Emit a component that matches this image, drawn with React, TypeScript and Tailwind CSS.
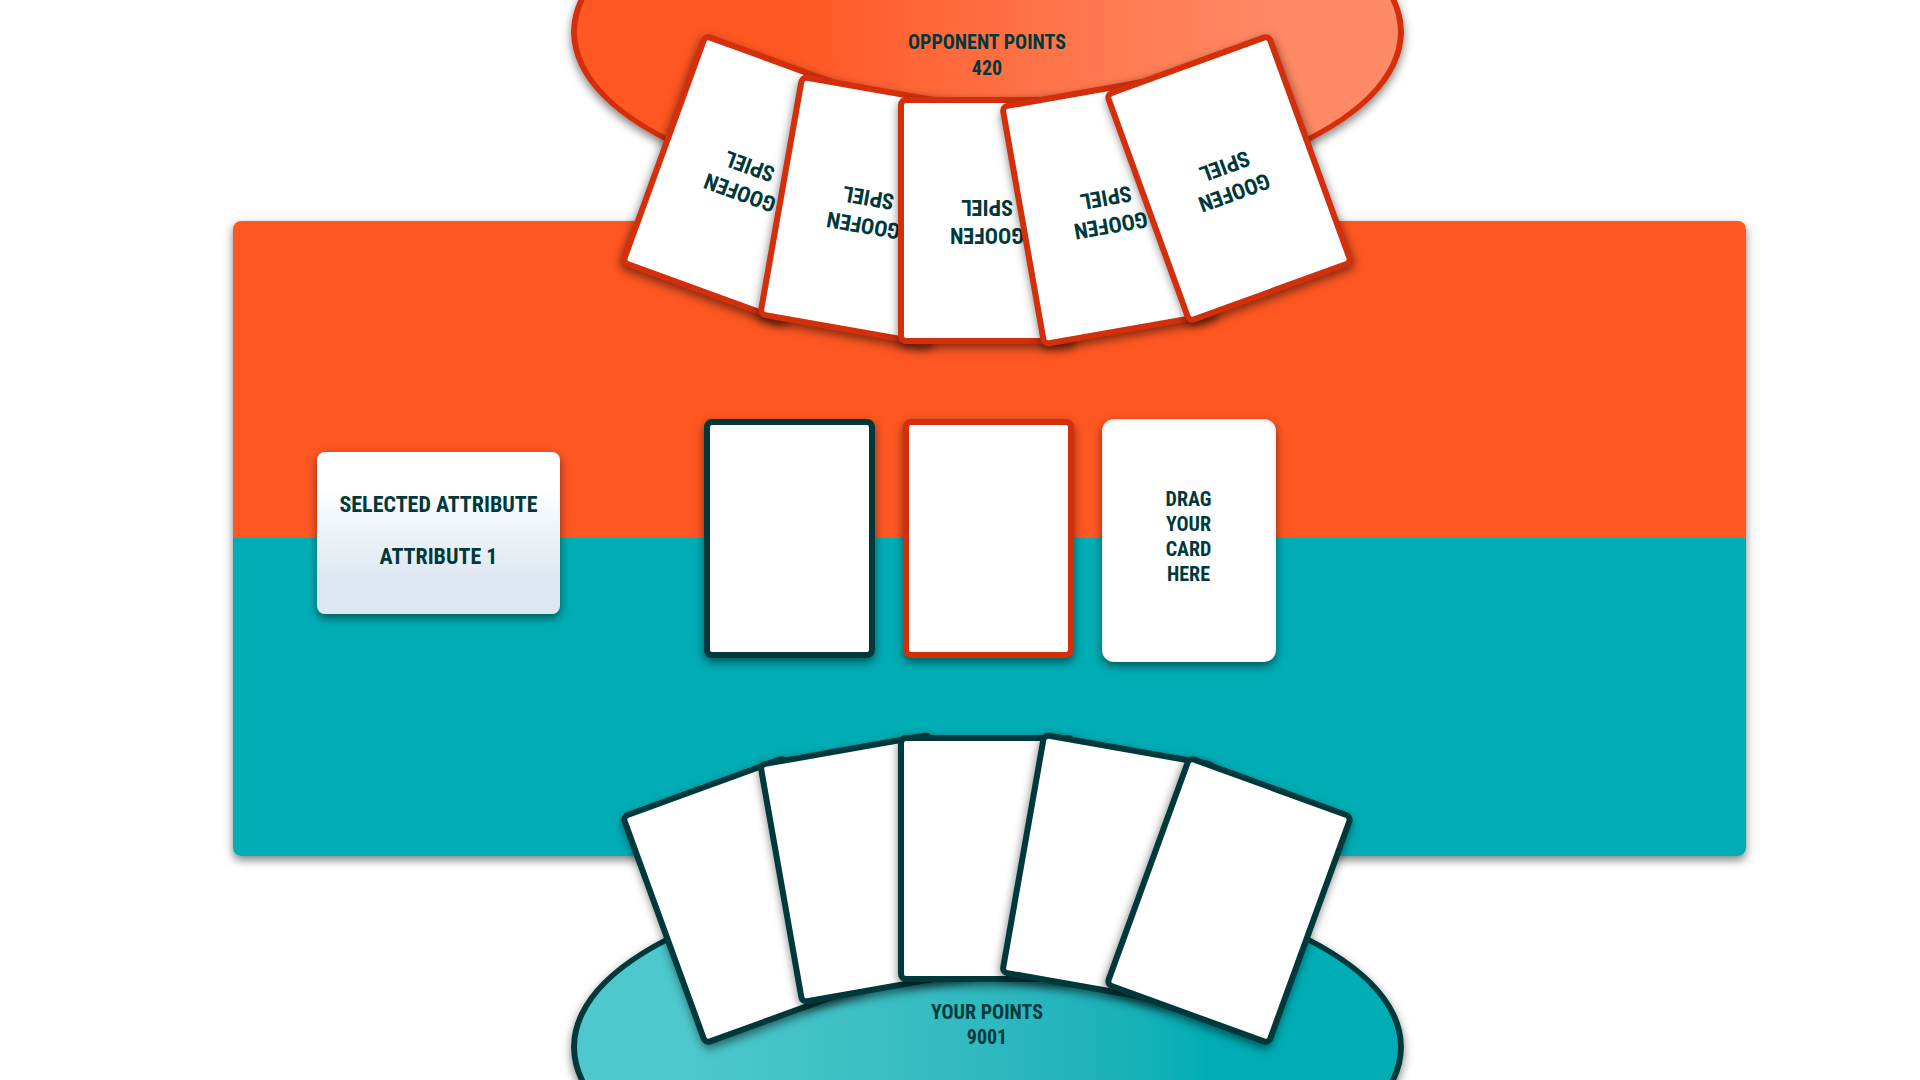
import React from "react";

type Side = "opponent" | "player";

const opponentFan = [
  "-translate-y-[42px] rotate-[20deg]",
  "-translate-y-[10px] rotate-[10deg]",
  "rotate-0",
  "-translate-y-[10px] rotate-[-10deg]",
  "-translate-y-[42px] rotate-[-20deg]",
];

const playerFan = [
  "translate-y-[42px] rotate-[-20deg]",
  "translate-y-[10px] rotate-[-10deg]",
  "rotate-0",
  "translate-y-[10px] rotate-[10deg]",
  "translate-y-[42px] rotate-[20deg]",
];

const borderColor: Record<Side, string> = {
  opponent: "border-[#d32f0b]",
  player: "border-[#00393c]",
};

const shadow = "shadow-[0_4px_10px_rgba(0,0,0,0.5)]";

function PlayedCard({ side }: { side: Side }) {
  return (
    <div className={`h-[239px] w-[171px] rounded-lg border-[6px] bg-white ${borderColor[side]} ${shadow}`} />
  );
}

function Hand({ side }: { side: Side }) {
  const fan = side === "opponent" ? opponentFan : playerFan;
  const place = side === "opponent" ? "self-start mt-[97px]" : "self-end mb-[98px]";
  return (
    <ul className={`col-start-1 row-start-1 z-10 flex justify-self-center ${place}`}>
      {fan.map((pose, i) => (
        <li
          key={i}
          className={`relative -ml-[57px] flex h-[247px] w-[178px] items-center justify-center rounded-lg border-[6px] bg-white first:ml-0 ${borderColor[side]} ${shadow} ${pose}`}
        >
          {side === "opponent" && (
            <span className="rotate-180 text-center text-[22px] leading-7">
              GOOFEN
              <br />
              SPIEL
            </span>
          )}
        </li>
      ))}
    </ul>
  );
}

function Points({ side, label, value }: { side: Side; label: string; value: number }) {
  const look =
    side === "opponent"
      ? "self-start -mt-[141px] justify-end pb-[118px] leading-[26px] bg-linear-to-r from-[#ff5722] from-26% to-[#ff8a65] to-86%"
      : "self-end -mb-[140px] justify-start pt-[120px] leading-[25px] bg-linear-to-r from-[#4dc8cc] from-14% to-[#00adb5] to-77%";
  return (
    <section
      className={`col-start-1 row-start-1 flex h-[346px] w-[833px] flex-col items-center justify-self-center rounded-[50%] border-[6px] text-center text-[20px] ${borderColor[side]} ${shadow} ${look}`}
    >
      <h2>{label}</h2>
      <p>{value}</p>
    </section>
  );
}

export default function App() {
  return (
    <main className="grid h-screen grid-cols-1 grid-rows-1 overflow-hidden bg-white pl-[54px] font-['Liberation_Sans_Narrow','Roboto_Condensed',Roboto,sans-serif] font-bold text-[#00393c]">
      <section
        className={`col-start-1 row-start-1 mt-[221px] mr-[174px] mb-[224px] ml-[179px] grid grid-cols-[1fr_auto_1fr] items-center rounded-lg bg-linear-to-b from-[#ff5722] from-50% to-[#00adb5] to-50% ${shadow}`}
      >
        <div
          className={`mb-3 ml-[84px] flex h-[162px] w-[243px] flex-col items-center justify-center gap-6 rounded-lg bg-linear-to-b from-white from-20% to-[#dde7f1] to-80% pb-1 text-[22px] leading-7 ${shadow}`}
        >
          <h2>SELECTED ATTRIBUTE</h2>
          <p>ATTRIBUTE 1</p>
        </div>
        <div className="mt-1 flex items-start gap-7">
          <PlayedCard side="player" />
          <PlayedCard side="opponent" />
          <div className="flex h-[243px] w-[174px] items-center justify-center rounded-xl bg-white text-center text-[20px] leading-[25px] shadow-[0_4px_10px_rgba(0,0,0,0.5),inset_0_1px_4px_rgba(0,0,0,0.15)]">
            <p className="w-16 pb-2">DRAG YOUR CARD HERE</p>
          </div>
        </div>
      </section>
      <Points side="opponent" label="OPPONENT POINTS" value={420} />
      <Points side="player" label="YOUR POINTS" value={9001} />
      <Hand side="opponent" />
      <Hand side="player" />
    </main>
  );
}
